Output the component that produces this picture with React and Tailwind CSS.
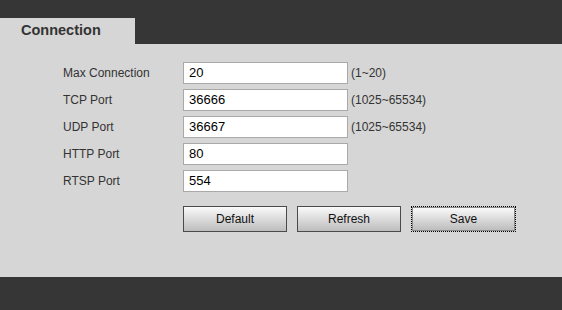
export default function App() {
  const rows = [
    { label: "Max Connection", value: "20", hint: "(1~20)" },
    { label: "TCP Port", value: "36666", hint: "(1025~65534)" },
    { label: "UDP Port", value: "36667", hint: "(1025~65534)" },
    { label: "HTTP Port", value: "80", hint: "" },
    { label: "RTSP Port", value: "554", hint: "" },
  ];
  const btn =
    "w-[104px] h-[26px] border border-[#4a4a4a] bg-gradient-to-b from-[#fafafa] to-[#bdbdbd] text-[12px] text-[#111] flex items-center justify-center";
  return (
    <div
      className="w-[562px] h-[310px] flex flex-col bg-[#363636]"
      style={{ fontFamily: '"Liberation Sans", Arial, sans-serif' }}
    >
      <div className="h-[18px]" />
      <div className="flex h-[26px]">
        <div className="w-[135px] bg-[#d6d6d6] text-[14.5px] font-bold text-[#333] pl-[21px] pt-[4px] leading-[16px]">
          Connection
        </div>
      </div>
      <div className="h-[233px] bg-[#d6d6d6] pt-[18px]">
        <div className="flex flex-col gap-[5px]">
          {rows.map((r) => (
            <div key={r.label} className="flex items-center h-[22px]">
              <div className="w-[183px] shrink-0 pl-[63px] text-[12px] text-[#333] whitespace-nowrap">
                {r.label}
              </div>
              <div className="w-[165px] shrink-0 h-[22px] bg-white border border-[#a9a9a9] text-[13px] text-black pl-[5px] flex items-center">
                {r.value}
              </div>
              <div className="pl-[3px] text-[12px] text-[#333]">{r.hint}</div>
            </div>
          ))}
        </div>
        <div className="flex gap-[10px] pl-[183px] pt-[14px]">
          <div className={btn}>Default</div>
          <div className={btn}>Refresh</div>
          <div className="w-[105px] h-[26px] border border-dotted border-black p-0">
            <div className="w-full h-full border border-[#8a8a8a] bg-gradient-to-b from-[#fafafa] to-[#bdbdbd] text-[12px] text-[#111] flex items-center justify-center">
              Save
            </div>
          </div>
        </div>
      </div>
      <div className="flex-1" />
    </div>
  );
}
